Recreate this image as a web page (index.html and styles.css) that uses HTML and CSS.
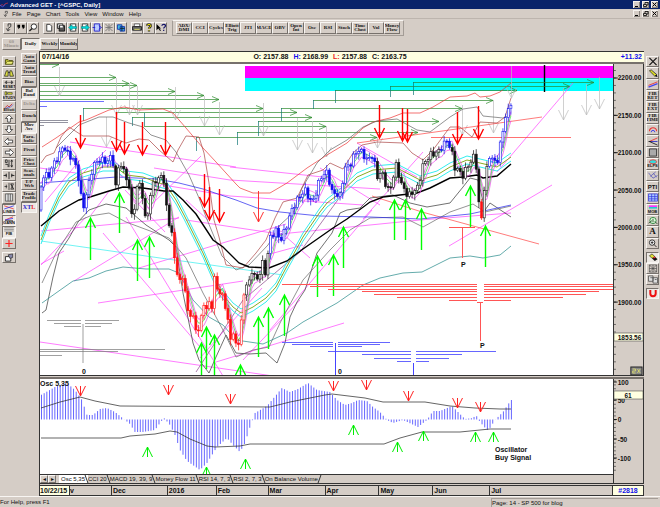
FILE: index.html
```
<!DOCTYPE html>
<html lang="en">
<head>
    <meta charset="UTF-8">
    <meta name="viewport" content="width=device-width, initial-scale=1.0">
    <title>Advanced GET - [^GSPC, Daily]</title>
    <link rel="stylesheet" href="styles.css">
</head>
<body>
    <!-- Icon shapes, 12x10 grid -->
    <svg class="sprite" aria-hidden="true">
        <symbol id="i-fig" viewBox="0 0 12 10"><path d="M5 1h3v3L5 6v2M3 6l2 3 2-2M5 1v3" fill="none" stroke="#333"/></symbol>
        <symbol id="i-quote" viewBox="0 0 12 10"><path d="M3 2h2v3L3 7V5H2V2zM8 2h2v3L8 7V5H7V2z"/></symbol>
        <symbol id="i-lens" viewBox="0 0 12 10"><circle cx="7" cy="4" r="3" fill="#fff" stroke="#222"/><path d="M5 6L2 9" stroke="#222" stroke-width="1.5"/></symbol>
        <symbol id="i-new" viewBox="0 0 12 10"><path d="M3.5 1.5h3.5l2 2v5.5h-5.5z" fill="#fff" stroke="#333"/></symbol>
        <symbol id="i-save" viewBox="0 0 12 10"><path d="M2 1h6v5H2z" fill="#eee" stroke="#222"/><path d="M4 3h6v6H4z" fill="#555" stroke="#111"/><path d="M5 3h3v2H5z" fill="#fff"/></symbol>
        <symbol id="i-prev" viewBox="0 0 12 10"><path d="M3 1h6v8H3z" fill="#fff" stroke="#333"/><path d="M1 5l4-3v2h5v2H5v2z" fill="#0dd" stroke="#066" stroke-width=".5"/></symbol>
        <symbol id="i-next" viewBox="0 0 12 10"><path d="M3 1h6v8H3z" fill="#fff" stroke="#333"/><path d="M11 5L7 2v2H2v2h5v2z" fill="#0dd" stroke="#066" stroke-width=".5"/></symbol>
        <symbol id="i-page" viewBox="0 0 12 10"><path d="M3 1h6v8H3z" fill="#bcf" stroke="#22c"/><path d="M1 5h3M8 3l3 2-3 2" fill="none" stroke="#22c"/></symbol>
        <symbol id="i-cut" viewBox="0 0 12 10"><path d="M2 1l8 8M10 1L2 9M6 1v8M2 5h8" stroke="#777" fill="none"/></symbol>
        <symbol id="i-grid" viewBox="0 0 12 10"><path d="M2 2h5v5H2z" fill="#4bd" stroke="#13a"/><path d="M5 4h5v5H5z" fill="#39d" stroke="#13a"/><path d="M5 6h5M7 4v5" stroke="#123"/></symbol>
        <symbol id="i-print" viewBox="0 0 12 10"><path d="M3 1h6v3H3z" fill="#fff" stroke="#222" stroke-width=".7"/><path d="M1 4h10v4H1z" fill="#666" stroke="#222"/><path d="M3 7h6" stroke="#ee6"/></symbol>
        <symbol id="i-help" viewBox="0 0 12 10"><path d="M4 3c0-2 4-2 4 0S6 4.5 6 6.5M6 8v1.5" fill="none" stroke="#222" stroke-width="2.5"/><path d="M4 3c0-2 4-2 4 0S6 4.5 6 6.5M6 8v1" fill="none" stroke="#fe0"/></symbol>
        <symbol id="i-what" viewBox="0 0 12 10"><path d="M1 1v7l2-2 2 3 1-1-2-2h2z"/><path d="M7 3c0-2 4-2 4 0S9 4.5 9 6M9 7.5V9" fill="none" stroke="#116" stroke-width="1.3"/></symbol>
        <symbol id="i-open" viewBox="0 0 12 10"><path d="M2 3h3l1 1h4v4H2z" fill="#cc3" stroke="#441"/><path d="M2 8l2-3h7l-2 3z" fill="#ee7" stroke="#441" stroke-width=".6"/></symbol>
        <symbol id="i-find" viewBox="0 0 12 10"><path d="M1 8l2-6h2v6zM7 8V2h2l2 6z" fill="#dd4" stroke="#222" stroke-width=".8"/><path d="M5 4h2" stroke="#222"/></symbol>
        <symbol id="i-reset" viewBox="0 0 12 10"><path d="M1 3l2-2v4zM11 3L9 1v4zM3 3h6" fill="#333" stroke="#333" stroke-width=".7"/></symbol>
        <symbol id="i-study" viewBox="0 0 12 10"><path d="M1 1h2v4H1zM4 2h6v2H4z" fill="#ee3" stroke="#222" stroke-width=".7"/></symbol>
        <symbol id="i-ellwave" viewBox="0 0 12 10"><path d="M1 6l3-3 2 2 4-4" fill="none" stroke="#c22"/><path d="M2 7l3-2 2 1 4-4" fill="none" stroke="#33d" stroke-width=".7"/></symbol>
        <symbol id="i-up" viewBox="0 0 12 10"><path d="M6 1l4 4H7.5v4h-3V5H2z" fill="#fff" stroke="#222" stroke-width=".8"/></symbol>
        <symbol id="i-down" viewBox="0 0 12 10"><path d="M6 9l4-4H7.5V1h-3v4H2z" fill="#fff" stroke="#222" stroke-width=".8"/></symbol>
        <symbol id="i-left" viewBox="0 0 12 10"><path d="M1 5l4-4v2.5h5v3H5V9z" fill="#fff" stroke="#222" stroke-width=".8"/></symbol>
        <symbol id="i-right" viewBox="0 0 12 10"><path d="M11 5L7 1v2.5H2v3h5V9z" fill="#fff" stroke="#222" stroke-width=".8"/></symbol>
        <symbol id="i-scale" viewBox="0 0 12 10"><path d="M2 1h2v3H2zM2 6h3v3M6 1v8M9 1v8M8 3l1-2 1 2M8 7l1 2 1-2" fill="none" stroke="#222" stroke-width=".9"/></symbol>
        <symbol id="i-spread" viewBox="0 0 12 10"><path d="M6 1v8M3 3v4M9 3v4M0 5h3l-1-1M12 5H9l1-1" fill="none" stroke="#222"/></symbol>
        <symbol id="i-shrink" viewBox="0 0 12 10"><path d="M1 5h3M3 3v4M6 1v8M8 2h3L8 8h3zM8 2l3 6" fill="none" stroke="#222" stroke-width=".8"/></symbol>
        <symbol id="i-cols" viewBox="0 0 12 10"><path d="M2 1h8v8H2zM5 1v8M7.5 1v8" fill="#ddd" stroke="#444" stroke-width=".8"/></symbol>
        <symbol id="i-lines" viewBox="0 0 12 10"><path d="M0 1l12 4" stroke="#e33"/><path d="M0 5l12-4" stroke="#33e"/></symbol>
        <symbol id="i-fan" viewBox="0 0 12 10"><path d="M1 5l10-4" stroke="#e33"/><path d="M1 5l10-2" stroke="#33e"/><path d="M1 6h10" stroke="#222"/></symbol>
        <symbol id="i-fib" viewBox="0 0 12 10"><path d="M0 1h12M0 3h12M0 5h12" stroke="#555" stroke-width=".7"/></symbol>
        <symbol id="i-cross" viewBox="0 0 12 10"><path d="M6 1v8M2 5h8" stroke="#f22" stroke-width="1.3"/></symbol>
        <symbol id="i-prop" viewBox="0 0 12 10"><path d="M2 4h6v5H2z" fill="#fff" stroke="#222"/><path d="M5 2l5-1v4L7 6z" fill="#88a" stroke="#222" stroke-width=".7"/></symbol>
        <symbol id="i-x" viewBox="0 0 12 10"><path d="M2 1l8 8M10 1L2 9" stroke="#111" stroke-width="1.3"/></symbol>
        <symbol id="i-pencil" viewBox="0 0 12 10"><path d="M2 2l2-1 6 5-2 2z" fill="#dd2" stroke="#222" stroke-width=".8"/><path d="M8 8l2-2 1 3z"/></symbol>
        <symbol id="i-channel" viewBox="0 0 12 10"><path d="M1 6l10-4" stroke="#e33"/><path d="M1 8l10-4" stroke="#44e" stroke-width="1.5"/></symbol>
        <symbol id="i-arc" viewBox="0 0 12 10"><path d="M2 7a4 4 0 0 1 8 0" fill="none" stroke="#e33" stroke-width="1.2"/><path d="M4 8a2 2 0 0 1 4 0" fill="none" stroke="#33e"/></symbol>
        <symbol id="i-gann" viewBox="0 0 12 10"><path d="M2 5l9-4" stroke="#e33"/><path d="M2 5h9" stroke="#33c"/><path d="M2 5l9 4M1 5h3" stroke="#222"/></symbol>
        <symbol id="i-box" viewBox="0 0 12 10"><path d="M2 1h8v8H2z" fill="#aaa" stroke="#333"/></symbol>
        <symbol id="i-ellipse" viewBox="0 0 12 10"><ellipse cx="6" cy="3.5" rx="4.5" ry="2.5" fill="#3dd" stroke="#e33"/></symbol>
        <symbol id="i-andrew" viewBox="0 0 12 10"><path d="M1 2l5 6 5-3M3 6l6-5M6 2l4 5" fill="none" stroke="#66b"/></symbol>
        <symbol id="i-table" viewBox="0 0 12 10"><path d="M1 1h10v8H1z" fill="#acf"/><path d="M1 1h10v8H1zM1 4h10M1 6.5h10M4.5 1v8M8 1v8" fill="none" stroke="#33d" stroke-width=".8"/></symbol>
        <symbol id="i-mob" viewBox="0 0 12 10"><path d="M1 1.5h10" stroke="#f3f" stroke-width="2"/><path d="M1 3.5h10" stroke="#2cc" stroke-width="2"/></symbol>
        <symbol id="i-trig" viewBox="0 0 12 10"><circle cx="6" cy="5" r="3.5" fill="#dfd" stroke="#384"/><path d="M1 8l4-3M6 3v4M8 6l3 3" stroke="#353"/></symbol>
        <symbol id="i-zoom" viewBox="0 0 12 10"><circle cx="5" cy="4" r="3" fill="#fff" stroke="#222"/><path d="M7 6l3 3M3.5 4h3M5 2.5v3" stroke="#222"/></symbol>
        <symbol id="i-erase" viewBox="0 0 12 10"><path d="M2 3l3-2 3 3-3 2z" fill="#dd3" stroke="#222" stroke-width=".7"/><path d="M5 6l3-2 3 3-3 2z" fill="#111"/><path d="M6 5l2-1 1 1-2 1z" fill="#e33"/></symbol>
        <symbol id="i-tiles" viewBox="0 0 12 10"><path d="M2 1h8v8H2zM2 1l8 8M10 1L2 9M2 5h8M6 1v8" fill="none" stroke="#444" stroke-width=".7"/></symbol>
        <symbol id="i-copy" viewBox="0 0 12 10"><path d="M1 1h5v6H1zM6 3h5v6H6zM3 3h3M8 5h2" fill="#ddd" stroke="#444" stroke-width=".8"/></symbol>
        <symbol id="i-magnet" viewBox="0 0 12 10"><path d="M3 1v4c0 4 6 4 6 0V1" fill="none" stroke="#e11" stroke-width="2.2"/></symbol>
        <symbol id="i-logo" viewBox="0 0 12 10"><path d="M0 7l3-3 2 2 3-3 4-1" fill="none" stroke="#e33"/><path d="M0 5l4 3 4-4" fill="none" stroke="#66f"/></symbol>
    </svg>

    <header class="titlebar">
        <svg class="logo"><use href="#i-logo"/></svg>
        <h1>Advanced GET - [^GSPC, Daily]</h1>
        <div class="winbtns">
            <button aria-label="Minimize"><svg viewBox="0 0 7 7"><path d="M2 5.5h3" stroke="#000"/></svg></button>
            <button aria-label="Restore"><svg viewBox="0 0 7 7"><path d="M3 3V1.5h3V4H5M1.5 3.5h3v2h-3z" fill="none" stroke="#000" stroke-width=".8"/></svg></button>
            <button aria-label="Close"><svg viewBox="0 0 7 7"><path d="M1.5 1.5l4 4M5.5 1.5l-4 4" stroke="#000"/></svg></button>
        </div>
    </header>

    <nav class="menubar">
        <svg class="logo"><use href="#i-fig"/></svg>
        <button>File</button>
        <button>Page</button>
        <button>Chart</button>
        <button>Tools</button>
        <button>View</button>
        <button>Window</button>
        <button>Help</button>
        <div class="winbtns">
            <button aria-label="Minimize chart"><svg viewBox="0 0 7 7"><path d="M2 5.5h3" stroke="#000"/></svg></button>
            <button aria-label="Restore chart"><svg viewBox="0 0 7 7"><path d="M3 3V1.5h3V4H5M1.5 3.5h3v2h-3z" fill="none" stroke="#000" stroke-width=".8"/></svg></button>
            <button aria-label="Close chart"><svg viewBox="0 0 7 7"><path d="M1.5 1.5l4 4M5.5 1.5l-4 4" stroke="#000"/></svg></button>
        </div>
    </nav>

    <div class="toolbar">
        <div class="group">
            <button class="tool" aria-label="Symbol"><svg><use href="#i-fig"/></svg></button>
            <button class="tool" aria-label="Quote"><svg><use href="#i-quote"/></svg></button>
            <button class="tool" aria-label="Search"><svg><use href="#i-lens"/></svg></button>
        </div>
        <div class="group">
            <button class="tool" aria-label="New"><svg><use href="#i-new"/></svg></button>
            <button class="tool" aria-label="Save"><svg><use href="#i-save"/></svg></button>
            <button class="tool" aria-label="Previous page"><svg><use href="#i-prev"/></svg></button>
            <button class="tool" aria-label="Next page"><svg><use href="#i-next"/></svg></button>
            <button class="tool" aria-label="Page"><svg><use href="#i-page"/></svg></button>
            <button class="tool" aria-label="Delete page"><svg><use href="#i-cut"/></svg></button>
            <button class="tool" aria-label="Layout"><svg><use href="#i-grid"/></svg></button>
        </div>
        <div class="group">
            <button class="tool" aria-label="Print"><svg><use href="#i-print"/></svg></button>
            <button class="tool" aria-label="Help"><svg><use href="#i-help"/></svg></button>
            <button class="tool" aria-label="What is this"><svg><use href="#i-what"/></svg></button>
        </div>
        <div class="group studies">
            <button class="label">ADX/<br>DMI</button>
            <button class="label">CCI</button>
            <button class="label">Cycles</button>
            <button class="label">Elliott<br>Trig</button>
            <button class="label">JTI</button>
            <button class="label">MACD</button>
            <button class="label">OBV</button>
            <button class="label">Open<br>Int</button>
            <button class="label">Osc</button>
            <button class="label">RSI</button>
            <button class="label">Stoch</button>
            <button class="label">Time<br>Clust</button>
            <button class="label">Vol</button>
            <button class="label">Money<br>Flow</button>
        </div>
    </div>

    <div class="periods">
        <button class="label" disabled>60<br>Minute</button>
        <button class="label pressed">Daily</button>
        <button class="label">Weekly</button>
        <button class="label">Monthly</button>
    </div>

    <main class="workspace">
        <aside class="side">
            <div class="rows rows17">
                <button class="tool" aria-label="Open"><svg><use href="#i-open"/></svg></button>
                <button class="tool" aria-label="Find"><svg><use href="#i-find"/></svg></button>
                <button class="tool tagged"><svg><use href="#i-reset"/></svg>RESET</button>
                <button class="tool tagged"><svg><use href="#i-study"/></svg>STUDY</button>
                <button class="tool tagged"><svg><use href="#i-ellwave"/></svg>Elliott</button>
                <button class="tool" aria-label="Up"><svg><use href="#i-up"/></svg></button>
                <button class="tool" aria-label="Down"><svg><use href="#i-down"/></svg></button>
                <button class="tool" aria-label="Left"><svg><use href="#i-left"/></svg></button>
                <button class="tool" aria-label="Right"><svg><use href="#i-right"/></svg></button>
                <button class="tool" aria-label="Scale"><svg><use href="#i-scale"/></svg></button>
                <button class="tool" aria-label="Spread bars"><svg><use href="#i-spread"/></svg></button>
                <button class="tool" aria-label="Shrink bars"><svg><use href="#i-shrink"/></svg></button>
                <button class="tool" aria-label="Columns"><svg><use href="#i-cols"/></svg></button>
                <button class="tool tagged pressed"><svg><use href="#i-lines"/></svg>LINES</button>
                <button class="tool tagged pressed"><svg><use href="#i-fan"/></svg>GANN</button>
                <button class="tool tagged pressed"><svg><use href="#i-fib"/></svg>FIB</button>
                <button class="tool" aria-label="Crosshair"><svg><use href="#i-cross"/></svg></button>
            </div>
            <div class="rows">
                <button class="tool" aria-label="Properties"><svg><use href="#i-prop"/></svg></button>
            </div>
        </aside>

        <aside class="side side-studies">
            <div class="rows rows14">
                <button class="label">Auto<br>Gann</button>
                <button class="label">Auto<br>Trend</button>
                <button class="label">Bias</button>
                <button class="label pressed">Bol<br>Band</button>
                <button class="label" disabled>Delta</button>
                <button class="label">Donch</button>
                <button class="label pressed">Mov<br>Ave</button>
                <button class="label">Para-<br>bolic</button>
                <button class="label">Pivot</button>
                <button class="label">Price<br>Clust</button>
                <button class="label">Seas-<br>onals</button>
                <button class="label">T/P<br>Web</button>
                <button class="label">Trade<br>Profile</button>
                <button class="label pressed xtl">XT<b>L</b></button>
            </div>
        </aside>

        <section class="charts">
            <div class="infobar">
                <span>07/14/16</span>
                <span class="quote">
                    <span>O: 2157.88</span>
                    <span><i class="high">H:</i> 2168.99</span>
                    <span><i class="low">L:</i> 2157.88</span>
                    <span>C: 2163.75</span>
                </span>
                <span class="change">+11.32</span>
            </div>

            <div class="panel price">
                <svg id="price" class="plot" viewBox="40 64 573 311" preserveAspectRatio="none"></svg>
                <svg id="priceAxis" class="axis" viewBox="613 64 31 311" preserveAspectRatio="none"></svg>
            </div>

            <div class="panel osc">
                <div class="osc-main">
                    <svg id="osc" class="plot" viewBox="40 379 573 95" preserveAspectRatio="none"></svg>
                    <div class="tabs">
                        <button class="scroll" aria-label="Scroll left">◂</button>
                        <button class="scroll" aria-label="Scroll right">▸</button>
                        <button class="tab active">Osc 5,35</button>
                        <button class="tab">CCI 20</button>
                        <button class="tab">MACD 19, 39, 9</button>
                        <button class="tab">Money Flow 11</button>
                        <button class="tab">RSI 14, 7, 3</button>
                        <button class="tab">RSI 2, 7, 3</button>
                        <button class="tab last">On Balance Volume</button>
                    </div>
                </div>
                <svg id="oscAxis" class="axis" viewBox="613 379 31 104" preserveAspectRatio="none"></svg>
            </div>

            <div class="timebar">
                <div class="months">
                    <span class="date">10/22/15</span>
                    <span class="first">v</span>
                    <span>Dec</span>
                    <span>2016</span>
                    <span>Feb</span>
                    <span>Mar</span>
                    <span>Apr</span>
                    <span>May</span>
                    <span>Jun</span>
                    <span>Jul</span>
                </div>
                <span class="count">#2818</span>
            </div>
        </section>

        <aside class="side side-draw">
            <div class="rows rows17">
                <button class="tool" aria-label="Delete"><svg><use href="#i-x"/></svg></button>
                <button class="tool" aria-label="Draw"><svg><use href="#i-pencil"/></svg></button>
                <button class="tool" aria-label="Channel"><svg><use href="#i-channel"/></svg></button>
                <button class="label">FIB<br>RET</button>
                <button class="label">FIB<br>EXT</button>
                <button class="label">FIB<br>TIME</button>
                <button class="tool" aria-label="Fib arc"><svg><use href="#i-arc"/></svg></button>
                <button class="tool" aria-label="Gann fan"><svg><use href="#i-gann"/></svg></button>
                <button class="tool" aria-label="Gann box"><svg><use href="#i-box"/></svg></button>
                <button class="tool tagged"><svg><use href="#i-ellipse"/></svg>ELPS</button>
                <button class="tool" aria-label="Andrews"><svg><use href="#i-andrew"/></svg></button>
                <button class="label pti">PTI</button>
                <button class="tool" aria-label="Table"><svg><use href="#i-table"/></svg></button>
                <button class="tool tagged"><svg><use href="#i-mob"/></svg>MOB</button>
                <button class="tool" aria-label="Trigger"><svg><use href="#i-trig"/></svg></button>
                <button class="label text">A</button>
                <button class="tool" aria-label="Zoom"><svg><use href="#i-zoom"/></svg></button>
            </div>
            <div class="rows">
                <button class="tool pressed" aria-label="Erase"><svg><use href="#i-erase"/></svg></button>
                <button class="tool" aria-label="Tile"><svg><use href="#i-tiles"/></svg></button>
                <button class="tool" aria-label="Copy"><svg><use href="#i-copy"/></svg></button>
            </div>
            <div class="rows">
                <button class="tool pressed" aria-label="Snap"><svg><use href="#i-magnet"/></svg></button>
            </div>
        </aside>
    </main>

    <footer class="statusbar">
        <span>For Help, press F1</span>
        <span class="page">Page: 14 - SP 500 for blog</span>
    </footer>

    <script src="chart.js"></script>
</body>
</html>
```
FILE: styles.css
```
* {
    box-sizing: border-box;
}
body {
    margin: 0;
    min-height: 100vh;
    display: flex;
    flex-direction: column;
    background-color: #d5cdc6;
    color: #111;
    font: 6px/8px "Liberation Sans", Arial, sans-serif;
}
.sprite {
    display: none;
}
button {
    padding: 0;
    border: 0;
    background: none;
    color: inherit;
    font: inherit;
    white-space: nowrap;
}
svg {
    display: block;
}

/* Title and menu */
.titlebar {
    display: flex;
    align-items: center;
    height: 9px;
    background-color: #0a246a;
    color: #fff;
}
.titlebar h1 {
    margin: 0;
    font-size: 6px;
}
.logo {
    width: 8px;
    height: 8px;
    margin-right: 2px;
}
.winbtns {
    display: flex;
    gap: 2px;
    margin-left: auto;
    padding-right: 2px;
}
.winbtns button {
    width: 7px;
    height: 7px;
    background-color: #d5cdc6;
    box-shadow: inset 1px 1px #f6f2ee, inset -1px -1px #8a847e;
}
.menubar {
    display: flex;
    align-items: center;
    gap: 5px;
    height: 10px;
    border-bottom: 1px solid #bdb5ae;
}
.menubar .logo {
    margin: 0 -3px 0 2px;
}

/* Buttons */
.tool, .label {
    display: flex;
    flex-direction: column;
    align-items: center;
    justify-content: center;
    border: 1px solid;
    border-color: #f8f5f2 #77716c #77716c #f8f5f2;
    background-color: #d5cdc6;
    overflow: hidden;
}
.tool svg {
    width: 12px;
    height: 9px;
}
.label {
    font: bold 5px/4px "Liberation Serif", serif;
}
.label:disabled {
    color: #9b948e;
}
.pressed {
    border-color: #77716c #f8f5f2 #f8f5f2 #77716c;
    background-color: #ece8e4;
}
.tagged {
    font: bold 4px/4px "Liberation Sans", sans-serif;
}
.tagged svg {
    height: 8px;
    margin-bottom: -3px;
}

/* Toolbars */
.toolbar {
    display: flex;
    align-items: center;
    gap: 4px;
    height: 17px;
    padding: 0 3px;
}
.group {
    display: flex;
}
.group .tool {
    width: 12px;
    height: 12px;
}
.studies {
    margin-left: 1px;
    padding: 1px 3px;
    border: 1px solid;
    border-color: #f8f5f2 #a39c96 #a39c96 #a39c96;
}
.studies .label {
    width: 16px;
    height: 12px;
}
.periods {
    display: flex;
    align-items: flex-start;
    height: 15px;
    padding: 2px;
}
.periods .label {
    width: 19px;
    height: 12px;
}
.workspace {
    flex: 1;
    display: flex;
}
.side {
    width: 19px;
    padding: 5px 3px 0 2px;
}
.side-studies {
    width: 20px;
    padding: 2px 2px 0;
}
.side-draw {
    width: 16px;
    padding: 5px 1px 0 2px;
}
.rows {
    display: grid;
    grid-auto-rows: minmax(11px, 1fr);
    margin-bottom: 3px;
}
.rows17 {
    height: 193px;
}
.rows14 {
    height: 160px;
}
.rows button {
    min-height: 0;
}
.rows .xtl {
    display: block;
    font: bold 6px/9px "Liberation Serif", serif;
    color: #22c;
}
.xtl b {
    color: #e22;
}
.pti {
    font: bold 6px/8px "Liberation Sans", sans-serif;
}
.text {
    font-size: 9px;
    line-height: 9px;
}

/* Chart area */
.charts {
    flex: 1;
    min-width: 0;
    display: flex;
    flex-direction: column;
    border-left: 1px solid #333;
}
.infobar {
    display: grid;
    grid-template-columns: 1fr auto 1fr;
    align-items: center;
    height: 11px;
    padding: 0 2px;
    border-top: 1px solid #333;
    background-color: #ffffe1;
    font-size: 7px;
    font-weight: bold;
}
.quote {
    display: flex;
    gap: 5px;
    margin-right: 24px;
}
.quote i {
    font-style: normal;
}
.high, .change, .count {
    color: #11e;
}
.low {
    color: #e22;
}
.change {
    text-align: right;
}
.panel {
    display: grid;
    grid-template-columns: 1fr 31px;
    border-top: 2px solid #77716c;
    border-bottom: 1px solid #333;
}
.price {
    flex: 1;
    min-height: 160px;
}
.plot, .axis {
    width: 100%;
    height: 100%;
    min-height: 0;
}
.plot {
    background-color: #fff;
}
.axis {
    background-color: #d5cdc6;
    border-left: 1px solid #333;
    border-right: 1px solid #333;
}
.osc {
    height: 107px;
    margin-top: 1px;
}
.osc-main {
    display: flex;
    flex-direction: column;
}
.osc-main .plot {
    height: 95px;
}
.tabs {
    display: flex;
    height: 9px;
    border-top: 1px solid #333;
}
.scroll {
    width: 8px;
    border: 1px solid;
    border-color: #f8f5f2 #77716c #77716c #f8f5f2;
    line-height: 6px;
}
.tab {
    display: flex;
    gap: 1px;
    padding-right: 1px;
}
.tab::after {
    content: "";
    width: 1px;
    height: 8px;
    background-color: #333;
    transform: skewX(20deg);
}
.tab.last::after {
    transform: skewX(-20deg);
}
.tab.active {
    margin-left: 3px;
    padding-left: 2px;
    background-color: #fff;
}
.timebar {
    display: grid;
    grid-template-columns: 1fr 31px;
    height: 11px;
    margin-top: 1px;
    border: 1px solid #333;
    border-left: 0;
    font: bold 7px/9px "Liberation Sans", sans-serif;
}
.months {
    display: grid;
    grid-template-columns: 29fr 42fr 56fr 49fr 52fr 57fr 54fr 54fr 57fr 123fr;
}
.months span {
    min-width: 0;
    padding-left: 1px;
    border-left: 1px solid #333;
}
.months .date {
    padding-left: 0;
    border-left: 0;
    background-color: #ffffe1;
}
.months .first {
    padding-left: 0;
}
.count {
    border-left: 1px solid #333;
    background-color: #ffffe1;
    text-align: center;
}
.statusbar {
    display: grid;
    grid-template-columns: 491fr 169fr;
    height: 11px;
    padding-top: 1px;
    border-top: 1px solid #f8f5f2;
}
.page {
    margin-right: 2px;
    border-top: 1px solid #a39c96;
    border-left: 1px solid #a39c96;
}

/* Chart drawing */
.ln {
    fill: none;
    stroke-width: 1;
}
.thin {
    stroke-width: .7;
}
.bold {
    stroke-width: 1.4;
}
.chart-text {
    font: bold 7px "Liberation Sans", sans-serif;
    fill: #111;
}
```
FILE: chart.js
```
const NS = 'http://www.w3.org/2000/svg';
const STEP = 2.67;

function add(svg, tag, attrs, text) {
    const el = document.createElementNS(NS, tag);
    for (const key in attrs) el.setAttribute(key, attrs[key]);
    if (text) el.textContent = text;
    svg.appendChild(el);
}

function path(svg, d, color, cls) {
    add(svg, 'path', { d: d, stroke: color, class: 'ln ' + (cls || '') });
}

// "x,y x,y ..." to a list of points
function points(str) {
    return str.trim().split(/\s+/).map(p => p.split(',').map(Number));
}

function line(svg, str, color, cls, dy) {
    const d = points(str).map(p => p[0] + ' ' + (p[1] + (dy || 0))).join('L');
    path(svg, 'M' + d, color, cls);
}

function valueAt(pts, x) {
    for (let i = 1; i < pts.length; i++) {
        if (x <= pts[i][0]) {
            const [x0, y0] = pts[i - 1];
            const [x1, y1] = pts[i];
            return y0 + (y1 - y0) * (x - x0) / (x1 - x0);
        }
    }
    return pts[pts.length - 1][1];
}

function label(svg, x, y, text, anchor) {
    add(svg, 'text', { x: x, y: y, class: 'chart-text', 'text-anchor': anchor || 'start' }, text);
}

// Vertical arrow from tail to tip
function arrow(svg, x, tail, tip, color, cls) {
    const s = tip > tail ? -1 : 1;
    path(svg, `M${x} ${tail}V${tip}M${x - 5} ${tip + 10 * s}L${x} ${tip}L${x + 5} ${tip + 10 * s}`, color, cls);
}

const price = document.getElementById('price');

// Target bands
add(price, 'rect', { x: 245, y: 66, width: 368, height: 12, fill: '#f0f' });
add(price, 'rect', { x: 245, y: 78, width: 368, height: 13, fill: '#0ff' });
path(price, 'M544.5 65V92', '#000', 'bold');

// Cycle projections: x1, y, x2, tick end
[
    [40, 64, 59], [40, 77, 116], [40, 83, 129], [40, 85, 137], [40, 91, 175], [40, 95, 204], [40, 99, 219],
    [83, 108, 263, 121], [116, 112, 297, 125], [132, 117, 312, 126], [144, 126, 326, 113], [196, 137, 377, 151],
    [237, 132, 418, 145], [258, 121, 439, 136], [281, 108, 462, 121], [313, 100, 493, 109], [335, 90, 517, 103],
    [390, 86, 570, 97], [413, 82, 594, 95]
].forEach(([x1, y, x2, tick]) => {
    const m = y + .5;
    path(price, `M${x1} ${m}H${x2}M${x2 - 7} ${m - 3}L${x2} ${m}L${x2 - 7} ${m + 3}`, '#2a8a2a', 'thin');
    if (tick) path(price, `M${x1 + .5} ${y}V${tick}`, '#177', 'thin');
});

[
    [59, 67, 96], [116, 78, 115], [129, 83, 115], [137, 86, 115], [106, 117, 147], [175, 87, 120], [204, 96, 126],
    [219, 102, 135], [263, 103, 136], [297, 118, 150], [312, 121, 153], [326, 126, 157], [377, 137, 148],
    [511, 66, 98], [563, 88, 120], [586, 84, 115], [599, 77, 109], [493, 100, 133], [462, 105, 135]
].forEach(a => arrow(price, a[0] + .5, a[1], a[2], '#bbb', 'thin'));

// Trend lines
[
    '70,142 236,167', '230,167 332,178', '40,168 76,173', '154,168 230,180 380,189', '163,185 230,196 363,205',
    '41,231 179,218', '186,220 286,235', '40,342 273,376', '98,303 243,281', '139,268 286,224', '74,281 179,217',
    '103,233 200,347', '126,217 223,376', '41,265 86,217', '41,264 64,251', '216,362 344,323', '449,246 552,185',
    '573,83 497,172', '270,330 372,210', '270,235 420,220 511,213', '357,143 417,177', '320,168 380,205',
    '363,219 423,152', '45,202 80,160', '148,208 201,156', '186,200 208,220', '270,254 303,245', '200,358 262,288',
    '243,360 300,300', '284,235 310,258', '84,172 106,150', '91,215 110,190', '125,190 165,232'
].forEach(l => line(price, l, '#f4f', 'thin'));
line(price, '196,372 243,300 300,252 345,190', '#848', 'thin');
line(price, '41,241 160,258 283,275', '#3ee', 'thin');
line(price, '357,143 542,117', '#f44', 'thin');
line(price, '431,137.5 571,137.5', '#f33', 'thin');
line(price, '372,196 422,212 539,244', '#f44', 'thin');
path(price, 'M40 101.5H104M40 106.5H47', '#33f', 'thin');
path(price, 'M40 120.5H68M40 122.5H68M40 125.5H44', '#667', 'thin');

// Bands
line(price, '42,147 56,138 79,122 86,120 109,110 124,107 139,110 163,109 173,113 186,128 203,148 216,162 236,184 240,188 253,193 270,193 287,183 307,168 327,155 347,143 363,128 373,122 390,118 403,113 420,113 433,107 450,97 467,96 475,93 480,97 490,96 500,92 511,83', '#e33', 'thin');
line(price, '56,148 79,125 99,117 113,117 129,123 143,127 151,135 166,140 176,152 189,175 199,198 206,217 222,256 236,270 249,265 268,245 280,225 293,213 302,188 317,163 330,150 347,140 363,127 377,121 397,119 417,130 430,132 450,117 463,109 477,107 483,116 503,118 511,115', '#666', 'thin');
line(price, '41,163 46,156 54,153 61,137 69,127 83,136 109,136 126,143 139,139 149,140 159,150 173,162 178,150 186,136 199,137 204,153 209,183 214,220 219,237 226,265 243,268 256,253 266,240 275,218 283,202 297,198 308,175 323,170 330,163 343,169 353,153 362,145 377,142 403,143 412,153 423,160 433,150 450,127 460,127 472,137 480,122 497,123 505,117 511,98', '#a44', 'thin');
line(price, '42,313 46,310 53,277 59,253 69,238 78,222 89,210 106,204 126,208 146,225 169,240 176,247 183,293 193,343 199,360 209,373 216,357 226,335 236,353 249,354 266,353 277,363 285,343 290,317 297,302 305,290 317,253 332,233 340,213 347,210 360,208 370,198 393,195 410,203 427,207 450,203 463,187 470,178 478,180 485,210 490,203 511,217', '#333', 'thin');
line(price, '42,283 56,253 76,222 90,216 109,213 126,222 169,238 186,258 203,293 223,330 236,357 253,350 269,347 280,323 303,280 330,250 350,230 370,218 403,217 423,227 450,212 473,204 485,212 511,206', '#666', 'thin');
line(price, '42,303 56,293 73,281 89,278 106,271 123,267 146,269 169,269 179,273 193,300 209,317 223,325 236,340 263,344 287,333 303,322 337,303 363,285 380,278 403,273 422,272 450,258 470,256 483,258 500,255 511,246', '#288', 'thin');
line(price, '40,183 79,180 116,177 156,179 179,183 203,189 236,200 257,208 280,212 320,216 370,217 420,219 470,214 511,205', '#22e', 'thin');

// Moving averages
const mid = '41,240 49,219 59,197 69,182 83,173 103,167 116,167 126,175 143,177 156,182 166,185 176,200 184,215 203,253 219,290 233,307 241,313 253,307 266,298 276,287 286,268 303,237 320,212 327,203 340,193 357,177 373,170 397,168 420,180 437,175 450,167 467,160 480,163 497,167 511,157';
line(price, mid, '#3ee', '', -4);
line(price, mid, '#3ee', '', 4);
line(price, mid, '#8a2');
line(price, '41,226 59,211 79,200 90,197 109,191 123,187 143,188 164,191 173,191 183,200 196,214 213,240 223,247 239,263 249,267 269,268 287,261 303,249 333,228 347,219 370,202 383,197 417,193 430,188 450,178 463,177 477,175 483,178 497,176 511,164', '#000', 'bold');

// Price path, one candle per step
const closes = points('41,187 43,176 49,175 54,163 60,154 63,145 67,153 72,158 77,168 80,190 83,209 88,188 91,173 96,161 103,160 108,162 112,153 116,190 119,161 124,172 128,180 132,216 135,205 139,176 142,195 145,218 149,208 153,181 158,182 162,170 165,194 168,218 172,236 176,268 179,284 184,272 186,308 189,312 194,320 197,332 200,330 203,298 206,314 209,300 212,308 215,274 219,296 223,294 227,316 230,338 234,333 237,352 241,325 245,283 249,284 253,266 256,284 259,275 263,262 266,277 269,240 276,230 280,241 286,228 290,214 297,200 305,190 312,203 317,190 320,178 327,172 332,192 340,196 345,168 350,165 355,153 360,150 367,160 373,155 377,177 382,172 387,189 390,190 396,165 402,186 408,196 413,192 418,187 423,165 430,155 438,152 447,140 452,153 455,168 460,172 463,176 468,165 473,160 475,146 478,196 481,224 483,200 485,182 489,155 493,160 497,163 502,135 505,118 508,112 511,102');

function candleColor(x) {
    if (x < 115) return '#11e';
    if (x < 172) return '#111';
    if (x < 246) return '#f11';
    if (x < 269) return '#111';
    if (x < 376) return '#11e';
    if (x < 440) return '#111';
    if (x < 450) return '#11e';
    if (x < 479) return '#111';
    if (x < 484) return '#f11';
    return x < 487 ? '#111' : '#11e';
}

const bars = [];
for (let i = 0; i < 177; i++) {
    const x = 41 + i * STEP;
    bars.push([x, valueAt(closes, x) + Math.sin(i * 2.4) * 3]);
}

// Fast average with its channel
const fast = bars.map((b, i) => {
    const part = bars.slice(Math.max(0, i - 3), i + 1);
    return b[0].toFixed(1) + ',' + (part.reduce((s, p) => s + p[1], 0) / part.length).toFixed(1);
}).join(' ');
line(price, fast, '#e4e', 'thin', 5);
line(price, fast, '#e4e', 'thin', -4);
line(price, fast, '#3d3', 'thin');

bars.forEach(([x, close], i) => {
    const open = i ? bars[i - 1][1] : 210;
    const color = candleColor(x);
    const top = Math.min(open, close);
    const height = Math.max(1, Math.abs(close - open));
    path(price, `M${x} ${top - 2 - i % 4}V${top + height + 2 + i % 3 * 2}`, color, 'thin');
    add(price, 'rect', {
        x: x - 1, y: top, width: 2, height: height,
        fill: close > open ? color : '#fff', stroke: color, 'stroke-width': .6
    });
});

// Signals
[
    [80, 115, 148], [116, 112, 151], [124, 122, 154], [142, 122, 155], [165, 122, 155], [204, 174, 207],
    [209, 187, 220], [219, 189, 222], [379, 105, 138], [402, 108, 141], [407, 109, 142], [457, 112, 144], [478, 106, 139]
].forEach(a => arrow(price, a[0] + .5, a[1], a[2], '#f00', 'bold'));
arrow(price, 258.5, 191, 222, '#f33', '');
[
    [90, 260, 218], [119, 233, 193], [137, 281, 240], [149, 278, 237], [201, 376, 343], [206, 369, 327],
    [214, 376, 335], [240, 376, 365], [258, 357, 317], [268, 349, 308], [284, 336, 295], [317, 297, 256],
    [333, 296, 255], [343, 268, 227], [394, 240, 200], [405, 240, 200], [421, 250, 209], [470, 227, 186], [485, 267, 226]
].forEach(a => arrow(price, a[0] + .5, a[1], a[2], '#0f0', 'bold'));

// Pivot and volume levels: left x1, left x2, right x1, right x2, y
[
    [282, 477, 484, 613, 284], [310, 477, 484, 613, 286], [328, 477, 484, 613, 289], [362, 477, 484, 599, 291],
    [374, 477, 484, 586, 294], [397, 477, 484, 563, 297], [449, 477, 484, 511, 300]
].forEach(l => path(price, `M${l[0]} ${l[4] + .5}H${l[1]}M${l[2]} ${l[4] + .5}H${l[3]}`, '#f55', ''));
[
    [282, 333, 338, 390, 342], [292, 333, 338, 380, 344], [310, 333, 338, 362, 346], [328, 411, 416, 496, 351],
    [362, 411, 416, 462, 354], [374, 411, 416, 449, 358], [397, 411, 416, 429, 361]
].forEach(l => path(price, `M${l[0]} ${l[4] + .5}H${l[1]}M${l[2]} ${l[4] + .5}H${l[3]}`, '#66f', ''));
path(price, 'M335.5 343V375M413.5 363V375', '#44f');
path(price, 'M477 302.5H483M480.5 302V341M449 227.5H475M462.5 227V258', '#f55');
path(price, 'M47 320.5H81M85 320.5H119M54 323.5H81M85 323.5H112M64 326.5H81M85 326.5H101M83 324V363M40 349.5H165M40 351.5H118M40 355.5H62', '#777', 'thin');
label(price, 82, 374, '0');
label(price, 338, 374, '0');
label(price, 461, 267, 'P');
label(price, 480, 348, 'P');

// Price scale
const priceAxis = document.getElementById('priceAxis');
for (let i = 0; i < 42; i++) {
    path(priceAxis, `M613 ${70.5 + i * 7.47}h2`, '#333', 'thin');
}
for (let i = 0; i < 7; i++) {
    const y = 78 + i * 37.35;
    path(priceAxis, `M613 ${y}h4`, '#111');
    label(priceAxis, 617, y + 2.5, (2200 - i * 50).toFixed(2));
}
add(priceAxis, 'rect', { x: 613, y: 333, width: 31, height: 8, fill: '#ffffe1', stroke: '#333', 'stroke-width': .5 });
label(priceAxis, 617, 340, '1853.56');
add(priceAxis, 'rect', { x: 631, y: 367, width: 12, height: 8, fill: '#888', stroke: '#222' });
path(priceAxis, 'M633 369h3v2h-3v2h3M638 369l3 4M641 369l-3 4', '#ee6', 'thin');

// Oscillator
const osc = document.getElementById('osc');
const oscPts = points('41,395 55,387 67,383 75,390 82,400 87,415 93,415 100,409 107,408 115,412 125,420 130,424 135,432 143,432 155,430 160,423 164,418 170,425 175,435 180,450 187,461 200,470 207,463 217,447 227,438 233,445 240,452 245,443 250,427 255,413 267,406 282,388 290,392 298,389 308,383 317,390 330,392 337,400 345,405 352,403 358,400 367,401 373,407 380,412 387,420 393,423 403,420 418,427 427,420 433,411 440,411 452,406 458,412 465,419 473,418 476,415 480,422 487,430 490,428 495,420 503,412 511,400');
for (let i = 0; i < 177; i++) {
    const x = 41.5 + i * STEP;
    path(osc, `M${x} 419.5V${valueAt(oscPts, x)}`, '#66f', '');
}
line(osc, '41,408 60,402 80,397 95,401 120,406 270,407 290,402 325,395 332,394 365,398 383,402 425,402 450,406 475,408 500,409 511,409', '#222', 'thin');
line(osc, '41,438 121,438 130,436 155,434 170,431 177,432 190,439 207,446 215,447 240,446 250,444 384,444 400,438 422,432 460,432 490,429 511,429', '#222', 'thin');
[[80, 396], [168, 395], [230, 404], [333, 391], [366, 390], [408, 401], [457, 408], [480, 412]]
    .forEach(a => arrow(osc, a[0] + .5, a[1] - 10, a[1], '#f22', ''));
[[147, 447], [206, 467], [245, 459], [353, 425], [397, 442], [423, 431], [475, 432], [493, 432]]
    .forEach(a => arrow(osc, a[0] + .5, a[1] + 10, a[1], '#0e0', ''));
label(osc, 40, 386, 'Osc 5,35');
label(osc, 495, 452, 'Oscillator');
label(osc, 495, 460, 'Buy Signal');

const oscAxis = document.getElementById('oscAxis');
for (let i = 0; i < 24; i++) {
    path(oscAxis, `M613 ${381 + i * 3.88}h2`, '#333', 'thin');
}
[['100', 382], ['50', 400], ['0', 419.5], ['-50', 439], ['-100', 458]].forEach(([text, y]) => {
    path(oscAxis, `M613 ${y}h3`, '#111');
    label(oscAxis, 617, y + 3, text);
});
add(oscAxis, 'rect', { x: 613, y: 391, width: 31, height: 8, fill: '#ffffe1', stroke: '#333', 'stroke-width': .5 });
label(oscAxis, 628, 398, '61', 'middle');
```
